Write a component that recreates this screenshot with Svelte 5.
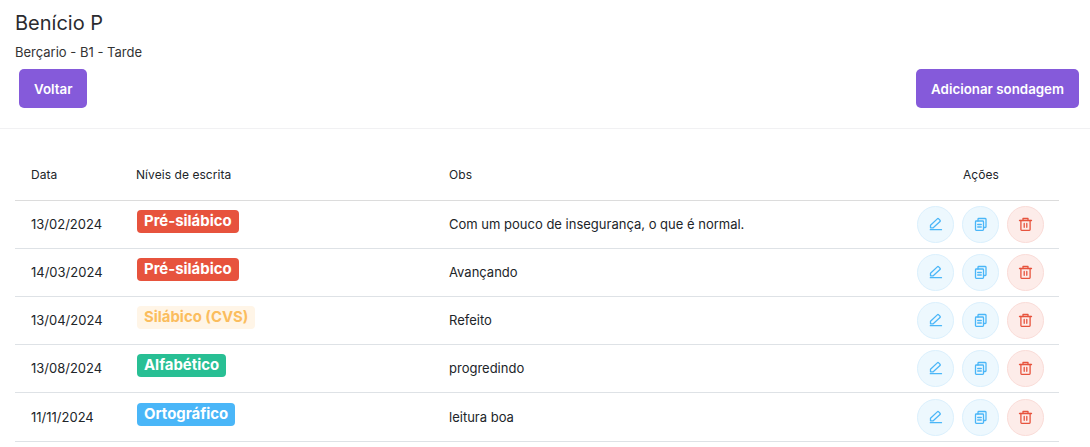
<script>
  const rows = [
    { date: "13/02/2024", level: "Pré-silábico", kind: "danger", obs: "Com um pouco de insegurança, o que é normal." },
    { date: "14/03/2024", level: "Pré-silábico", kind: "danger", obs: "Avançando" },
    { date: "13/04/2024", level: "Silábico (CVS)", kind: "warning", obs: "Refeito" },
    { date: "13/08/2024", level: "Alfabético", kind: "success", obs: "progredindo" },
    { date: "11/11/2024", level: "Ortográfico", kind: "info", obs: "leitura boa" },
  ];
</script>

<main>
  <header>
    <h1>Benício P</h1>
    <p>Berçario - B1 - Tarde</p>
    <div class="toolbar">
      <button class="primary">Voltar</button>
      <button class="primary">Adicionar sondagem</button>
    </div>
  </header>

  <section>
    <table>
      <thead>
        <tr>
          <th class="col-date">Data</th>
          <th class="col-level">Níveis de escrita</th>
          <th class="col-obs">Obs</th>
          <th class="col-actions">Ações</th>
        </tr>
      </thead>
      <tbody>
        {#each rows as row}
          <tr>
            <td class="text">{row.date}</td>
            <td><span class="badge {row.kind}">{row.level}</span></td>
            <td class="text">{row.obs}</td>
            <td class="cell-actions">
              <div class="actions">
                <button class="round blue" aria-label="Editar">
                  <svg viewBox="0 0 15 15" width="15" height="15" fill="none" stroke="currentColor" stroke-width="1.3" stroke-linecap="round" stroke-linejoin="round">
                    <path d="M2.500 8.300 9.300 1.900a1 1 0 0 1 1.400 0l1.300 1.300a1 1 0 0 1 0 1.400L5.200 10.800H2.500z" />
                    <path d="M2.300 12.700h11.200" />
                  </svg>
                </button>
                <button class="round blue" aria-label="Copiar">
                  <svg viewBox="0 0 15 15" width="15" height="15" fill="none" stroke="currentColor" stroke-width="1.3" stroke-linecap="round" stroke-linejoin="round">
                    <rect x="2.500" y="4" width="8" height="9.300" rx=".8" />
                    <path d="M5 4V2.200a.7 .7 0 0 1 .7-.7h6.600a.7 .7 0 0 1 .7 .7v7.600a.7 .7 0 0 1-.7 .7h-1.800" />
                    <path d="M4.700 7.500h3.600M4.700 10h3.600" />
                  </svg>
                </button>
                <button class="round red" aria-label="Excluir">
                  <svg viewBox="0 0 15 15" width="15" height="15" fill="none" stroke="currentColor" stroke-width="1.3" stroke-linecap="round" stroke-linejoin="round">
                    <path d="M1.500 3.500h12" />
                    <path d="M5 3.500V1.500h5v2" />
                    <path d="M2.900 3.500v9.100a.7 .7 0 0 0 .7 .7h7.800a.7 .7 0 0 0 .7-.7V3.500" />
                    <path d="M6.200 6.500v3.800M8.800 6.500v3.800" />
                  </svg>
                </button>
              </div>
            </td>
          </tr>
        {/each}
      </tbody>
    </table>
  </section>
</main>

<style>
  :global(body) {
    background: #fff;
    font-family: Inter, "Open Sans", sans-serif;
    color: #212529;
  }
  header {
    padding: 11px 11px 20px 15px;
    border-bottom: 1px solid #f1f1f3;
  }
  h1 {
    margin: 0;
    font-size: 20px;
    line-height: 24px;
    font-weight: 400;
    color: #2b2b2f;
  }
  p {
    margin: 9px 0 0;
    font-size: 13px;
    line-height: 16px;
    color: #333;
  }
  .toolbar {
    display: flex;
    justify-content: space-between;
    margin-top: 9px;
    padding-left: 4px;
  }
  .primary {
    height: 39px;
    padding: 0 15px;
    border: none;
    border-radius: 5px;
    background: #855ada;
    color: #fff;
    font-family: inherit;
    font-size: 13.33px;
    font-weight: 600;
  }
  section {
    padding: 24px 31px 0 15px;
  }
  table {
    width: 100%;
    border-collapse: collapse;
    table-layout: fixed;
    font-size: 13px;
  }
  th {
    height: 43px;
    padding: 0 16px 4px;
    text-align: left;
    font-size: 12px;
    font-weight: 400;
    letter-spacing: 0.06px;
    color: #212529;
  }
  .col-date { width: 73px; }
  .col-level { width: 281px; }
  .col-actions { width: 124px; text-align: center; }
  tr { border-bottom: 1px solid #dee2e6; }
  thead tr { border-bottom: 1px solid #dcdcdc; }
  td {
    height: 47px;
    padding: 0 16px;
    color: #212529;
  }
  td.text {
    height: 46px;
    padding-bottom: 1px;
  }
  tbody tr:last-child td {
    height: 48px;
    padding-bottom: 0;
  }
  .cell-actions { padding: 0 15px 0 0; }
  .badge {
    position: relative;
    top: -3px;
    display: inline-block;
    margin-left: 1px;
    padding: 0 7px;
    border-radius: 4px;
    font-size: 14.9px;
    line-height: 23px;
    font-weight: 700;
    color: #fff;
  }
  .danger { background: #e7533d; }
  .warning { background: #fff5e7; color: #fbbd5e; }
  .success { background: #28bf94; }
  .info { background: #4ab6f8; }
  .actions {
    display: flex;
    justify-content: flex-end;
    gap: 8px;
  }
  .round {
    display: flex;
    align-items: center;
    justify-content: center;
    width: 37px;
    height: 37px;
    padding: 0;
    border-radius: 50%;
  }
  .blue {
    background: #edf8fe;
    border: 1px solid #dbf0fd;
    color: #4ab6f8;
  }
  .red {
    background: #fdece9;
    border: 1px solid #fadcd8;
    color: #e7533d;
  }
</style>
